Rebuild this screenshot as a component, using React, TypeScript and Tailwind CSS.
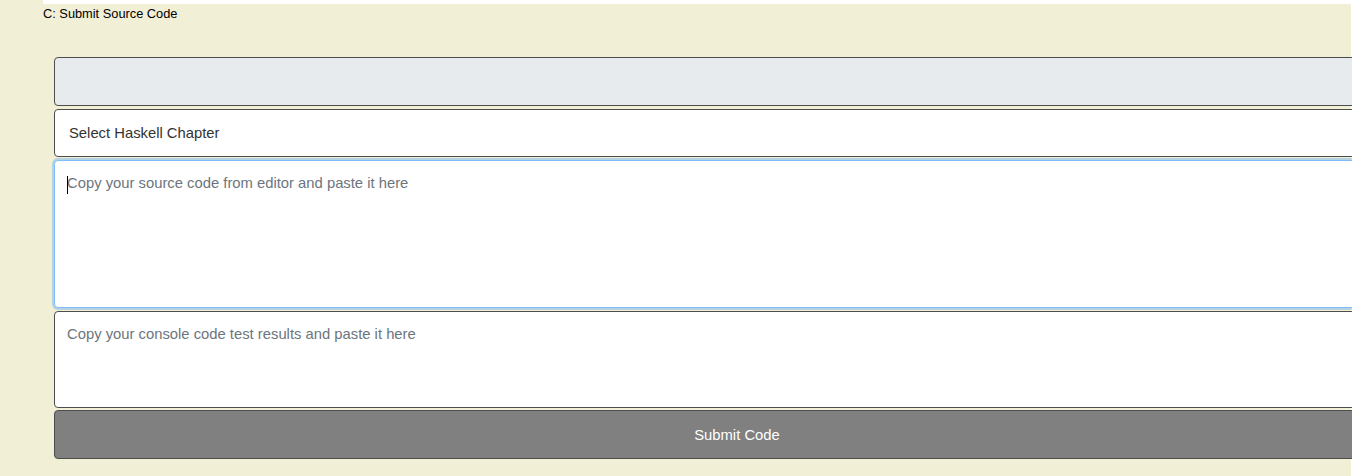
export default function App() {
  return (
    <div className="h-[476px] w-[1352px] overflow-hidden bg-white font-['Liberation_Sans',Arial,sans-serif]">
      <div className="h-[4px] w-[43px] bg-[#f2efd7]" />
      <div className="h-[472px] w-[1351px] bg-[#f2efd7] pl-[43px]">
        <div className="pt-[1px] text-[12.8px] leading-[18px] text-black">C: Submit Source Code</div>
        <div className="mt-[34px] ml-[11px] flex w-[1366px] flex-col">
          <div className="h-[49px] rounded-[4px] border border-[#4d4d4d] bg-[#e8ebee]" />
          <div className="mt-[3px] flex h-[48px] items-center rounded-[4px] border border-[#4d4d4d] bg-white pl-[14px] text-[14.8px] text-[#333]">
            Select Haskell Chapter
          </div>
          <div className="mt-[3px] h-[148px] rounded-[4px] border border-[#80bdff] bg-white px-[12px] pt-[12px] text-[14.8px] leading-[20px] text-[#6c757d] shadow-[0_0_0_2px_rgba(0,123,255,0.25)]">
            <span className="mr-[-1px] inline-block h-[18px] w-px translate-y-[3px] bg-black align-top" />
            Copy your source code from editor and paste it here
          </div>
          <div className="mt-[3px] h-[97px] rounded-[4px] border border-[#4d4d4d] bg-white px-[12px] pt-[12px] text-[14.8px] leading-[20px] text-[#6c757d]">
            Copy your console code test results and paste it here
          </div>
          <div className="mt-[2px] flex h-[49px] items-center justify-center rounded-[4px] border border-[#4d4d4d] bg-[#808080] pt-[2px] text-[14.8px] text-white">
            Submit Code
          </div>
        </div>
      </div>
    </div>
  );
}
